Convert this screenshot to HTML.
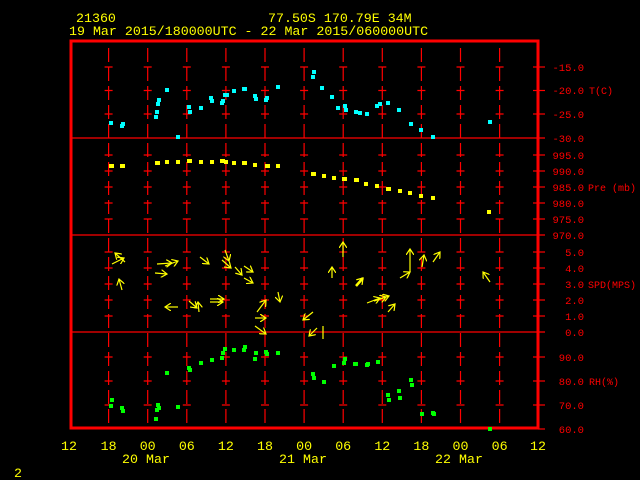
<!DOCTYPE html>
<html><head><meta charset="utf-8"><style>
html,body{margin:0;padding:0;background:#000;width:640px;height:480px;overflow:hidden}
svg{display:block}
text{font-family:"Liberation Mono",monospace}
.y{fill:#ffff00;font-size:13.3px}
.r{fill:#ff0000;font-size:10.5px}
.s{fill:#ff0000;font-size:10px}
</style></head><body>
<svg width="640" height="480" viewBox="0 0 640 480" xmlns="http://www.w3.org/2000/svg">
<defs>
<marker id="ah" markerWidth="8" markerHeight="8" refX="6" refY="4" orient="auto" markerUnits="userSpaceOnUse">
<path d="M0,0 L6,4 L0,8" fill="none" stroke="#ffff00" stroke-width="1.2"/>
</marker>
</defs>
<text class="y" x="76" y="22">21360</text>
<text class="y" x="268" y="22">77.50S  170.79E   34M</text>
<text class="y" x="69" y="35">19 Mar 2015/180000UTC - 22 Mar 2015/060000UTC</text>

<g stroke="#ff0000" stroke-width="1.2" stroke-dasharray="14 5">
<line x1="108.6" y1="48" x2="108.6" y2="424"/>
<line x1="147.7" y1="48" x2="147.7" y2="424"/>
<line x1="186.8" y1="48" x2="186.8" y2="424"/>
<line x1="225.9" y1="48" x2="225.9" y2="424"/>
<line x1="265" y1="48" x2="265" y2="424"/>
<line x1="304.1" y1="48" x2="304.1" y2="424"/>
<line x1="343.2" y1="48" x2="343.2" y2="424"/>
<line x1="382.3" y1="48" x2="382.3" y2="424"/>
<line x1="421.4" y1="48" x2="421.4" y2="424"/>
<line x1="460.5" y1="48" x2="460.5" y2="424"/>
<line x1="499.6" y1="48" x2="499.6" y2="424"/>
</g>
<g stroke="#ff0000" stroke-width="1.2" stroke-dasharray="8 31.1">
<line x1="104.6" y1="67" x2="510" y2="67"/>
<line x1="104.6" y1="90.5" x2="510" y2="90.5"/>
<line x1="104.6" y1="114" x2="510" y2="114"/>
<line x1="104.6" y1="155" x2="510" y2="155"/>
<line x1="104.6" y1="171" x2="510" y2="171"/>
<line x1="104.6" y1="187" x2="510" y2="187"/>
<line x1="104.6" y1="203" x2="510" y2="203"/>
<line x1="104.6" y1="219" x2="510" y2="219"/>
<line x1="104.6" y1="252" x2="510" y2="252"/>
<line x1="104.6" y1="268" x2="510" y2="268"/>
<line x1="104.6" y1="284" x2="510" y2="284"/>
<line x1="104.6" y1="300" x2="510" y2="300"/>
<line x1="104.6" y1="316" x2="510" y2="316"/>
<line x1="104.6" y1="357" x2="510" y2="357"/>
<line x1="104.6" y1="381" x2="510" y2="381"/>
<line x1="104.6" y1="405" x2="510" y2="405"/>
</g>
<g stroke="#ff0000" stroke-width="1.2">
<line x1="533" y1="67" x2="545" y2="67"/><line x1="533" y1="90.5" x2="545" y2="90.5"/><line x1="533" y1="114" x2="545" y2="114"/>
<line x1="533" y1="155" x2="545" y2="155"/><line x1="533" y1="171" x2="545" y2="171"/><line x1="533" y1="187" x2="545" y2="187"/><line x1="533" y1="203" x2="545" y2="203"/><line x1="533" y1="219" x2="545" y2="219"/>
<line x1="533" y1="252" x2="545" y2="252"/><line x1="533" y1="268" x2="545" y2="268"/><line x1="533" y1="284" x2="545" y2="284"/><line x1="533" y1="300" x2="545" y2="300"/><line x1="533" y1="316" x2="545" y2="316"/>
<line x1="533" y1="357" x2="545" y2="357"/><line x1="533" y1="381" x2="545" y2="381"/><line x1="533" y1="405" x2="545" y2="405"/>
<line x1="70" y1="138" x2="545" y2="138"/>
<line x1="70" y1="235" x2="545" y2="235"/>
<line x1="70" y1="332" x2="545" y2="332"/>
<line x1="538" y1="429" x2="545" y2="429"/>
</g>
<rect x="71" y="41" width="467" height="387" fill="none" stroke="#ff0000" stroke-width="3"/>

<g class="r" text-anchor="end">
<text x="584" y="71">-15.0</text><text x="584" y="94">-20.0</text><text x="584" y="118">-25.0</text><text x="584" y="142">-30.0</text>
<text x="584" y="159">995.0</text><text x="584" y="175">990.0</text><text x="584" y="191">985.0</text><text x="584" y="207">980.0</text><text x="584" y="223">975.0</text><text x="584" y="239">970.0</text>
<text x="584" y="256">5.0</text><text x="584" y="272">4.0</text><text x="584" y="288">3.0</text><text x="584" y="304">2.0</text><text x="584" y="320">1.0</text><text x="584" y="336">0.0</text>
<text x="584" y="361">90.0</text><text x="584" y="385">80.0</text><text x="584" y="409">70.0</text><text x="584" y="433">60.0</text>
</g>
<g class="s">
<text x="589" y="94">T(C)</text>
<text x="588" y="191">Pre (mb)</text>
<text x="588" y="288">SPD(MPS)</text>
<text x="589" y="385">RH(%)</text>
</g>

<g class="y" text-anchor="middle">
<text x="69" y="450">12</text><text x="108.6" y="450">18</text><text x="147.7" y="450">00</text><text x="186.8" y="450">06</text><text x="225.9" y="450">12</text><text x="265" y="450">18</text><text x="304.1" y="450">00</text><text x="343.2" y="450">06</text><text x="382.3" y="450">12</text><text x="421.4" y="450">18</text><text x="460.5" y="450">00</text><text x="499.6" y="450">06</text><text x="538" y="450">12</text>
<text x="146" y="463">20 Mar</text><text x="303" y="463">21 Mar</text><text x="459" y="463">22 Mar</text>
</g>
<text class="y" x="14" y="477">2</text>

<g fill="#00ffff">
<rect x="109" y="121" width="4" height="4"/><rect x="120" y="124" width="4" height="4"/><rect x="121" y="122" width="4" height="4"/>
<rect x="154" y="115" width="4" height="4"/><rect x="155" y="110" width="4" height="4"/><rect x="156" y="102" width="4" height="4"/><rect x="157" y="98" width="4" height="4"/><rect x="165" y="88" width="4" height="4"/>
<rect x="176" y="135" width="4" height="4"/><rect x="187" y="105" width="4" height="4"/><rect x="188" y="110" width="4" height="4"/><rect x="199" y="106" width="4" height="4"/>
<rect x="209" y="96" width="4" height="4"/><rect x="210" y="99" width="4" height="4"/><rect x="220" y="101" width="4" height="4"/><rect x="221" y="99" width="4" height="4"/><rect x="223" y="93" width="4" height="4"/><rect x="225" y="93" width="4" height="4"/>
<rect x="232" y="89" width="4" height="4"/><rect x="242" y="87" width="5" height="4"/><rect x="253" y="94" width="4" height="4"/><rect x="254" y="97" width="4" height="4"/><rect x="264" y="98" width="4" height="4"/><rect x="265" y="96" width="4" height="4"/><rect x="276" y="85" width="4" height="4"/>
<rect x="311" y="75" width="4" height="4"/><rect x="312" y="70" width="4" height="4"/><rect x="320" y="86" width="4" height="4"/><rect x="330" y="95" width="4" height="4"/><rect x="336" y="106" width="4" height="4"/><rect x="343" y="104" width="4" height="4"/><rect x="344" y="108" width="4" height="4"/>
<rect x="354" y="110" width="4" height="4"/><rect x="358" y="111" width="4" height="4"/><rect x="365" y="112" width="4" height="4"/><rect x="375" y="104" width="4" height="4"/><rect x="378" y="102" width="4" height="4"/><rect x="386" y="101" width="4" height="4"/><rect x="397" y="108" width="4" height="4"/>
<rect x="409" y="122" width="4" height="4"/><rect x="419" y="128" width="4" height="4"/><rect x="431" y="135" width="4" height="4"/><rect x="488" y="120" width="4" height="4"/>
</g>
<g fill="#ffff00">
<rect x="109" y="164" width="5" height="4"/><rect x="120" y="164" width="5" height="4"/><rect x="155" y="161" width="5" height="4"/><rect x="165" y="160" width="4" height="4"/><rect x="176" y="160" width="4" height="4"/><rect x="187" y="159" width="5" height="4"/><rect x="199" y="160" width="4" height="4"/><rect x="210" y="160" width="4" height="4"/><rect x="220" y="159" width="5" height="4"/><rect x="224" y="160" width="4" height="4"/><rect x="232" y="161" width="4" height="4"/><rect x="242" y="161" width="5" height="4"/><rect x="253" y="163" width="4" height="4"/><rect x="265" y="164" width="5" height="4"/><rect x="276" y="164" width="4" height="4"/>
<rect x="311" y="172" width="5" height="4"/><rect x="322" y="174" width="4" height="4"/><rect x="332" y="176" width="4" height="4"/><rect x="342" y="177" width="5" height="4"/><rect x="354" y="178" width="5" height="4"/><rect x="364" y="182" width="4" height="4"/><rect x="375" y="184" width="4" height="4"/><rect x="386" y="187" width="5" height="4"/><rect x="398" y="189" width="4" height="4"/><rect x="408" y="191" width="4" height="4"/><rect x="419" y="194" width="4" height="4"/><rect x="431" y="196" width="4" height="4"/><rect x="487" y="210" width="4" height="4"/>
</g>
<g fill="#00ff00">
<rect x="110" y="398" width="4" height="4"/><rect x="109" y="404" width="4" height="4"/><rect x="120" y="406" width="4" height="4"/><rect x="121" y="409" width="4" height="4"/>
<rect x="154" y="417" width="4" height="4"/><rect x="155" y="408" width="4" height="4"/><rect x="156" y="403" width="4" height="4"/><rect x="157" y="406" width="4" height="4"/><rect x="165" y="371" width="4" height="4"/><rect x="176" y="405" width="4" height="4"/>
<rect x="187" y="366" width="4" height="4"/><rect x="188" y="368" width="4" height="4"/><rect x="199" y="361" width="4" height="4"/><rect x="210" y="358" width="4" height="4"/><rect x="220" y="356" width="4" height="4"/><rect x="221" y="351" width="4" height="4"/><rect x="223" y="347" width="4" height="4"/>
<rect x="232" y="348" width="4" height="4"/><rect x="242" y="348" width="4" height="4"/><rect x="243" y="345" width="4" height="4"/><rect x="253" y="357" width="4" height="4"/><rect x="254" y="351" width="4" height="4"/><rect x="264" y="350" width="4" height="4"/><rect x="265" y="352" width="4" height="4"/><rect x="276" y="351" width="4" height="4"/>
<rect x="311" y="372" width="4" height="4"/><rect x="312" y="376" width="4" height="4"/><rect x="322" y="380" width="4" height="4"/><rect x="332" y="364" width="4" height="4"/><rect x="342" y="361" width="4" height="4"/><rect x="343" y="357" width="4" height="4"/>
<rect x="353" y="362" width="5" height="4"/><rect x="365" y="363" width="4" height="4"/><rect x="366" y="362" width="4" height="4"/><rect x="376" y="360" width="4" height="4"/>
<rect x="386" y="393" width="4" height="4"/><rect x="387" y="398" width="4" height="4"/><rect x="397" y="389" width="4" height="4"/><rect x="398" y="396" width="4" height="4"/><rect x="409" y="378" width="4" height="4"/><rect x="410" y="383" width="4" height="4"/>
<rect x="420" y="412" width="4" height="4"/><rect x="431" y="411" width="4" height="4"/><rect x="432" y="412" width="4" height="4"/><rect x="488" y="427" width="4" height="4"/>
</g>
<g stroke="#ffff00" stroke-width="1.2" fill="none" marker-end="url(#ah)">
<line x1="125" y1="262" x2="115" y2="253"/><line x1="112" y1="264" x2="124" y2="258"/>
<line x1="122" y1="290" x2="119" y2="279"/>
<line x1="157" y1="264" x2="172" y2="263"/><line x1="165" y1="266" x2="178" y2="261"/><line x1="155" y1="273" x2="167" y2="274"/>
<line x1="200" y1="257" x2="209" y2="264"/>
<line x1="225" y1="250" x2="229" y2="261"/><line x1="222" y1="260" x2="231" y2="268"/><line x1="235" y1="267" x2="242" y2="275"/><line x1="244" y1="266" x2="253" y2="272"/><line x1="244" y1="278" x2="253" y2="283"/>
<line x1="178" y1="307" x2="165" y2="307"/>
<line x1="189" y1="301" x2="197" y2="308"/><line x1="199" y1="312" x2="198" y2="302"/>
<line x1="210" y1="299" x2="224" y2="299"/><line x1="210" y1="302" x2="223" y2="302"/>
<line x1="257" y1="312" x2="266" y2="300"/><line x1="255" y1="318" x2="266" y2="318"/><line x1="278" y1="292" x2="280" y2="302"/>
<line x1="255" y1="326" x2="266" y2="334"/>
<line x1="313" y1="312" x2="303" y2="320"/><line x1="317" y1="328" x2="309" y2="336"/>
<line x1="343" y1="257" x2="343" y2="242"/>
<line x1="332" y1="278" x2="332" y2="267"/>
<line x1="367" y1="303" x2="380" y2="298"/><line x1="380" y1="299" x2="389" y2="296"/><line x1="388" y1="312" x2="395" y2="304"/><line x1="374" y1="301" x2="386" y2="297"/>
<line x1="400" y1="278" x2="410" y2="272"/><line x1="410" y1="272" x2="410" y2="249"/>
<line x1="422" y1="267" x2="424" y2="255"/><line x1="433" y1="262" x2="440" y2="252"/>
<line x1="490" y1="282" x2="483" y2="272"/>
</g>
<line x1="356" y1="286" x2="363" y2="278" stroke="#ffff00" stroke-width="2.5" marker-end="url(#ah)"/>
<line x1="323" y1="326" x2="323" y2="339" stroke="#ffff00" stroke-width="1.2"/>
</svg>
</body></html>
